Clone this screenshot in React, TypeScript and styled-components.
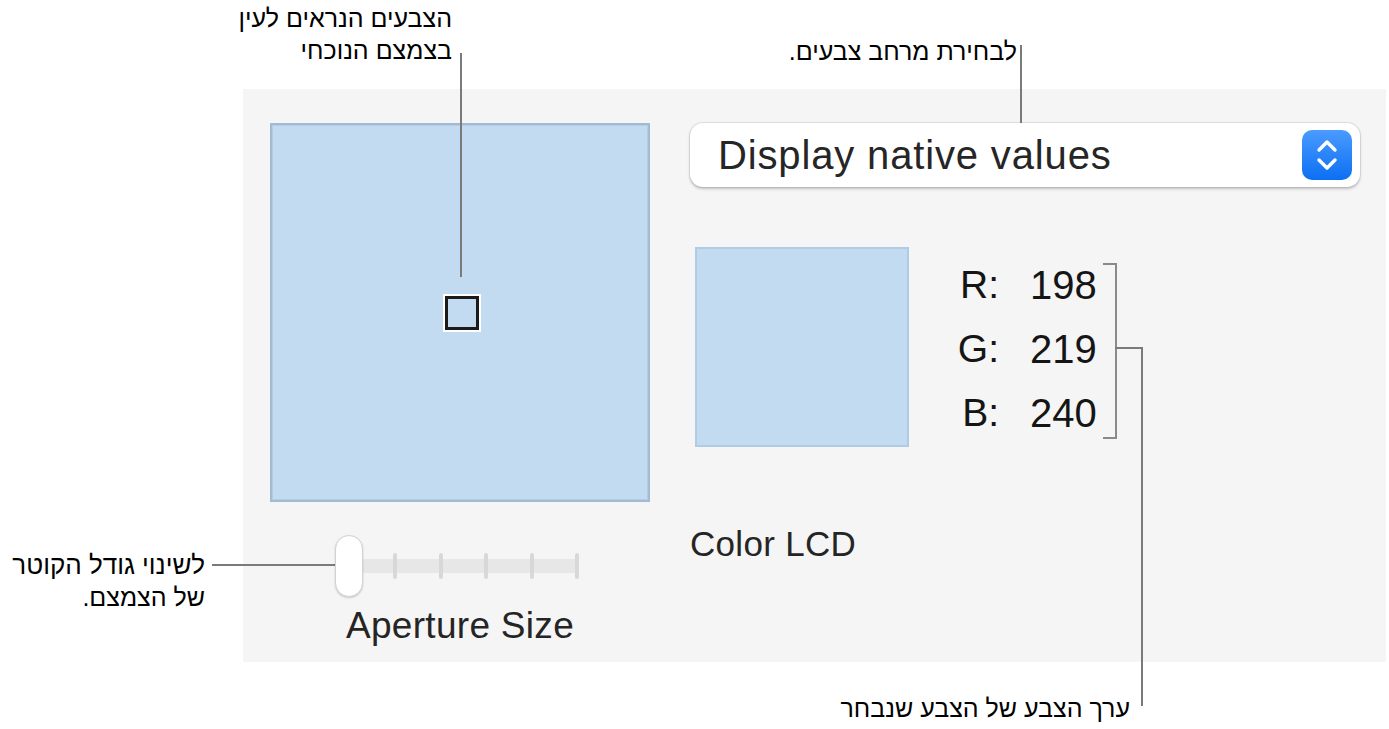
import React from "react";
import styled, { createGlobalStyle } from "styled-components";

const GlobalStyle = createGlobalStyle`
  html, body { margin: 0; padding: 0; background: #ffffff; }
  body { font-family: "Liberation Sans", Arial, "DejaVu Sans", sans-serif; }
`;

const Page = styled.div`
  position: relative;
  width: 1389px;
  height: 729px;
  overflow: hidden;
  background: #ffffff;
  padding-top: 89px;
  padding-left: 243px;
  box-sizing: border-box;
`;

const Panel = styled.div`
  width: 1143px;
  height: 573px;
  background: #f5f5f5;
  box-sizing: border-box;
  padding: 34px 0 0 27px;
  display: grid;
  grid-template-columns: 380px 670px;
  column-gap: 40px;
  align-items: start;
`;

const LeftCol = styled.div`
  display: flex;
  flex-direction: column;
  align-items: center;
`;

const BigSwatch = styled.div`
  position: relative;
  width: 380px;
  height: 379px;
  box-sizing: border-box;
  background: #c3dbf1;
  border: 2px solid #a2bbd3;
  box-shadow: inset 0 0 0 1px #b4cde4;
`;

const Aperture = styled.div`
  position: absolute;
  left: 173px;
  top: 171px;
  width: 34px;
  height: 34px;
  box-sizing: border-box;
  border: 3px solid #1b1b1b;
  outline: 2px solid #ffffff;
  background: #c3dbf1;
`;

const SliderRow = styled.div`
  margin-top: 33px;
  display: flex;
  align-items: center;
  height: 62px;
  width: 244px;
  position: relative;
  margin-left: -6px;
`;

const Track = styled.div`
  position: absolute;
  left: 14px;
  right: 2px;
  top: 24px;
  height: 14px;
  background: #e7e7e7;
  border-radius: 3px;
`;

const Ticks = styled.div`
  position: absolute;
  left: 58px;
  right: 0;
  top: 18px;
  height: 26px;
  display: flex;
  justify-content: space-between;
`;

const Tick = styled.div`
  width: 4px;
  height: 26px;
  border-radius: 2px;
  background: #d8d8d8;
`;

const Thumb = styled.div`
  position: relative;
  z-index: 1;
  width: 28px;
  height: 62px;
  box-sizing: border-box;
  border-radius: 14px;
  background: #ffffff;
  border: 1px solid #d2d2d2;
  box-shadow: 0 1px 2px rgba(0, 0, 0, 0.18);
`;

const UiText = styled.div<{ $size?: number }>`
  font-family: "Liberation Sans", Arial, sans-serif;
  font-size: ${(p) => p.$size ?? 36}px;
  line-height: 1.1;
  color: #252525;
  white-space: nowrap;
`;

const SliderLabel = styled(UiText)`
  margin-top: 9px;
  font-size: 37px;
  letter-spacing: 0.3px;
`;

const RightCol = styled.div`
  display: flex;
  flex-direction: column;
`;

const Popup = styled.div`
  height: 64px;
  box-sizing: border-box;
  background: #ffffff;
  border-radius: 13px;
  box-shadow: 0 0 0 1px rgba(0, 0, 0, 0.07), 0 1.5px 3px rgba(0, 0, 0, 0.22);
  display: flex;
  align-items: center;
  justify-content: space-between;
  padding: 0 8px 0 28px;
`;

const PopupText = styled(UiText)`
  font-size: 40px;
  letter-spacing: 0.85px;
  color: #262626;
`;

const Stepper = styled.div`
  width: 50px;
  height: 50px;
  border-radius: 10px;
  background: linear-gradient(#4a9bff, #0c6ff3);
  display: flex;
  align-items: center;
  justify-content: center;
`;

const InfoRow = styled.div`
  margin-top: 60px;
  display: flex;
  align-items: flex-start;
`;

const SmallSwatch = styled.div`
  margin-left: 5px;
  width: 214px;
  height: 200px;
  box-sizing: border-box;
  background: #c3dbf1;
  border: 2px solid #b0cbe4;
`;

const Values = styled.div`
  margin-left: 44px;
  margin-top: 6px;
  display: grid;
  grid-template-columns: 46px auto;
  column-gap: 31px;
  grid-auto-rows: 64px;
  align-items: center;
`;

const ValueLabel = styled(UiText)`
  text-align: right;
  font-size: 39px;
  color: #151515;
`;

const ValueNum = styled(UiText)`
  font-size: 40px;
  color: #151515;
`;

const DeviceName = styled(UiText)`
  margin-top: 78px;
  font-size: 35px;
  letter-spacing: 0.3px;
`;

/* annotations */
const Callout = styled.div<{ $top: number; $right: number }>`
  position: absolute;
  top: ${(p) => p.$top}px;
  right: ${(p) => p.$right}px;
  direction: rtl;
  text-align: right;
  font-family: "Liberation Sans", Arial, "DejaVu Sans", sans-serif;
  font-size: 25px;
  line-height: 32px;
  color: #000;
  white-space: nowrap;
`;

const VLine = styled.div<{ $x: number; $y1: number; $y2: number }>`
  position: absolute;
  left: ${(p) => p.$x}px;
  top: ${(p) => p.$y1}px;
  height: ${(p) => p.$y2 - p.$y1}px;
  width: 2px;
  background: #7a7a7a;
`;

const HLine = styled.div<{ $y: number; $x1: number; $x2: number }>`
  position: absolute;
  top: ${(p) => p.$y}px;
  left: ${(p) => p.$x1}px;
  width: ${(p) => p.$x2 - p.$x1}px;
  height: 2px;
  background: #7a7a7a;
`;

const Bracket = styled.div`
  position: absolute;
  left: 1103px;
  top: 263px;
  width: 12px;
  height: 172px;
  border: 2px solid #8a8a8a;
  border-left: none;
`;

export default function App() {
  return (
    <>
      <GlobalStyle />
      <Page>
        <Panel>
          <LeftCol>
            <BigSwatch>
              <Aperture />
            </BigSwatch>
            <SliderRow>
              <Track />
              <Ticks>
                {[0, 1, 2, 3, 4].map((i) => (
                  <Tick key={i} />
                ))}
              </Ticks>
              <Thumb />
            </SliderRow>
            <SliderLabel>Aperture Size</SliderLabel>
          </LeftCol>
          <RightCol>
            <Popup>
              <PopupText>Display native values</PopupText>
              <Stepper>
                <svg width="26" height="36" viewBox="0 0 26 36" fill="none">
                  <path d="M5 13 L13 5 L21 13" stroke="#fff" strokeWidth="3.4" strokeLinecap="round" strokeLinejoin="round" />
                  <path d="M5 23 L13 31 L21 23" stroke="#fff" strokeWidth="3.4" strokeLinecap="round" strokeLinejoin="round" />
                </svg>
              </Stepper>
            </Popup>
            <InfoRow>
              <SmallSwatch />
              <Values>
                <ValueLabel>R:</ValueLabel>
                <ValueNum>198</ValueNum>
                <ValueLabel>G:</ValueLabel>
                <ValueNum>219</ValueNum>
                <ValueLabel>B:</ValueLabel>
                <ValueNum>240</ValueNum>
              </Values>
            </InfoRow>
            <DeviceName>Color LCD</DeviceName>
          </RightCol>
        </Panel>

        <Callout $top={2} $right={937}>
          הצבעים הנראים לעין
          <br />
          בצמצם הנוכחי
        </Callout>
        <VLine $x={460} $y1={53} $y2={277} />

        <Callout $top={35} $right={372}>לבחירת מרחב צבעים.</Callout>
        <VLine $x={1020} $y1={45} $y2={123} />

        <Callout $top={549} $right={1184}>
          <span style={{ fontSize: 26 }}>לשינוי גודל הקוטר</span>
          <br />
          של הצמצם.
        </Callout>
        <HLine $y={564} $x1={212} $x2={338} />

        <Bracket />
        <HLine $y={347} $x1={1115} $x2={1143} />
        <VLine $x={1141} $y1={347} $y2={706} />
        <Callout $top={692} $right={259}>ערך הצבע של הצבע שנבחר</Callout>
      </Page>
    </>
  );
}
